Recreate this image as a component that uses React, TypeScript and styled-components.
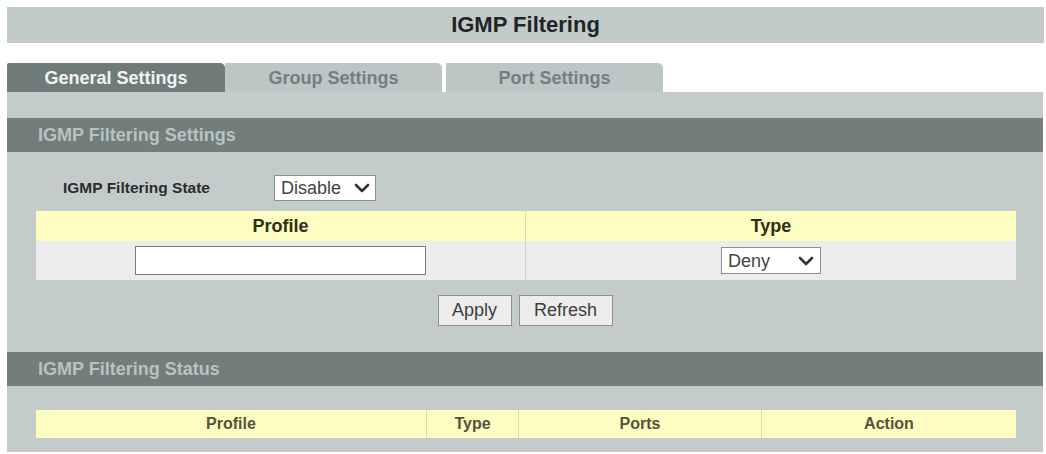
import React, { useState } from "react";
import styled, { createGlobalStyle } from "styled-components";

const GlobalStyle = createGlobalStyle`
  html, body {
    margin: 0;
    padding: 0;
    background: #ffffff;
  }
  body {
    font-family: "Liberation Sans", Arial, sans-serif;
  }
`;

const Page = styled.div`
  padding: 7px 2px 2px 7px;
  display: flex;
  flex-direction: column;
`;

const TitleBar = styled.div`
  height: 36px;
  background: #c2cbca;
  display: flex;
  align-items: center;
  justify-content: center;
  font-size: 22px;
  font-weight: bold;
  color: #1f2427;
`;

const TabRow = styled.div`
  margin-top: 20px;
  display: flex;
  height: 29px;
`;

const Tab = styled.div<{ $active?: boolean; $gap?: number }>`
  width: ${(p) => (p.$active ? 218 : 217)}px;
  margin-right: ${(p) => p.$gap ?? 0}px;
  background: ${(p) => (p.$active ? "#6f7b79" : "#bcc6c5")};
  color: ${(p) => (p.$active ? "#f1f4f4" : "#6f8083")};
  border-top-right-radius: 5px;
  border-top-left-radius: ${(p) => (p.$active ? 2 : 0)}px;
  display: flex;
  align-items: center;
  justify-content: center;
  padding-top: 2px;
  box-sizing: border-box;
  font-size: 18px;
  font-weight: bold;
`;

const Panel = styled.div`
  background: #c3cccb;
  padding: 26px 0 14px;
  width: 1036px;
  display: flex;
  flex-direction: column;
`;

const SectionHeader = styled.div`
  height: 34px;
  background: #717e7c;
  color: #b8c2c1;
  font-size: 18px;
  font-weight: bold;
  display: flex;
  align-items: center;
  padding-left: 31px;
`;

const StateRow = styled.div`
  display: flex;
  align-items: center;
  margin-top: 23px;
  padding-left: 56px;
`;

const Label = styled.span`
  width: 211px;
  font-size: 15.5px;
  font-weight: bold;
  color: #2a2d2e;
`;

const SelectWrap = styled.div<{ $w: number; $h: number }>`
  position: relative;
  width: ${(p) => p.$w}px;
  height: ${(p) => p.$h}px;
  border: 1px solid #8a8e8f;
  background: #ffffff;
  box-sizing: border-box;
`;

const Select = styled.select`
  appearance: none;
  -webkit-appearance: none;
  border: none;
  outline: none;
  background: transparent;
  width: 100%;
  height: 100%;
  padding: 0 0 0 6px;
  font-family: "Liberation Sans", Arial, sans-serif;
  font-size: 18px;
  color: #444;
`;

const Chevron = styled.svg<{ $right: number }>`
  position: absolute;
  right: ${(p) => p.$right}px;
  top: 50%;
  transform: translateY(-50%);
  pointer-events: none;
`;

const Table = styled.div<{ $cols: string; $top: number }>`
  margin: ${(p) => p.$top}px 27px 0 29px;
  display: grid;
  grid-template-columns: ${(p) => p.$cols};
`;

const HeadCell = styled.div<{ $h: number; $size: number; $color: string; $last?: boolean }>`
  height: ${(p) => p.$h}px;
  background: #fdfdc1;
  display: flex;
  align-items: center;
  justify-content: center;
  font-size: ${(p) => p.$size}px;
  font-weight: bold;
  color: ${(p) => p.$color};
  border-right: ${(p) => (p.$last ? "none" : "1px solid #dcdcb0")};
`;

const DataCell = styled.div<{ $last?: boolean }>`
  height: 39px;
  background: #ececec;
  display: flex;
  align-items: center;
  justify-content: center;
  border-right: ${(p) => (p.$last ? "none" : "1px solid #d0d0d0")};
`;

const TextInput = styled.input`
  width: 291px;
  height: 29px;
  box-sizing: border-box;
  border: 1px solid #7a7e80;
  background: #fff;
  outline: none;
  font-size: 16px;
`;

const ButtonRow = styled.div`
  display: flex;
  justify-content: center;
  gap: 7px;
  margin-top: 15px;
  margin-bottom: 26px;
`;

const Button = styled.button<{ $w: number }>`
  width: ${(p) => p.$w}px;
  height: 31px;
  background: #ededed;
  border: 1px solid #8e9293;
  font-family: "Liberation Sans", Arial, sans-serif;
  font-size: 18px;
  color: #3a3d3e;
  padding: 0;
`;

function ChevronIcon({ right }: { right: number }) {
  return (
    <Chevron $right={right} width="16" height="10" viewBox="0 0 16 10">
      <path d="M2 2 L8 8 L14 2" fill="none" stroke="#2f3335" strokeWidth="2.6" strokeLinecap="round" strokeLinejoin="round" />
    </Chevron>
  );
}

export default function App() {
  const [state, setState] = useState("Disable");
  const [type, setType] = useState("Deny");
  const [profile, setProfile] = useState("");

  return (
    <>
      <GlobalStyle />
      <Page>
        <TitleBar>IGMP Filtering</TitleBar>
        <TabRow>
          <Tab $active>General Settings</Tab>
          <Tab $gap={4}>Group Settings</Tab>
          <Tab>Port Settings</Tab>
        </TabRow>
        <Panel>
          <SectionHeader>IGMP Filtering Settings</SectionHeader>
          <StateRow>
            <Label>IGMP Filtering State</Label>
            <SelectWrap $w={102} $h={26}>
              <Select value={state} onChange={(e) => setState(e.target.value)}>
                <option>Disable</option>
                <option>Enable</option>
              </Select>
              <ChevronIcon right={5} />
            </SelectWrap>
          </StateRow>
          <Table $cols="490px 1fr" $top={10}>
            <HeadCell $h={30} $size={18} $color="#2e2e16">Profile</HeadCell>
            <HeadCell $h={30} $size={18} $color="#2e2e16" $last>
              Type
            </HeadCell>
            <DataCell>
              <TextInput value={profile} onChange={(e) => setProfile(e.target.value)} />
            </DataCell>
            <DataCell $last>
              <SelectWrap $w={100} $h={27}>
                <Select value={type} onChange={(e) => setType(e.target.value)}>
                  <option>Deny</option>
                  <option>Permit</option>
                </Select>
                <ChevronIcon right={6} />
              </SelectWrap>
            </DataCell>
          </Table>
          <ButtonRow>
            <Button $w={74}>Apply</Button>
            <Button $w={94}>Refresh</Button>
          </ButtonRow>
          <SectionHeader>IGMP Filtering Status</SectionHeader>
          <Table $cols="391px 92px 243px 1fr" $top={24}>
            <HeadCell $h={28} $size={16} $color="#54543a">Profile</HeadCell>
            <HeadCell $h={28} $size={16} $color="#54543a">Type</HeadCell>
            <HeadCell $h={28} $size={16} $color="#54543a">Ports</HeadCell>
            <HeadCell $h={28} $size={16} $color="#54543a" $last>
              Action
            </HeadCell>
          </Table>
        </Panel>
      </Page>
    </>
  );
}
